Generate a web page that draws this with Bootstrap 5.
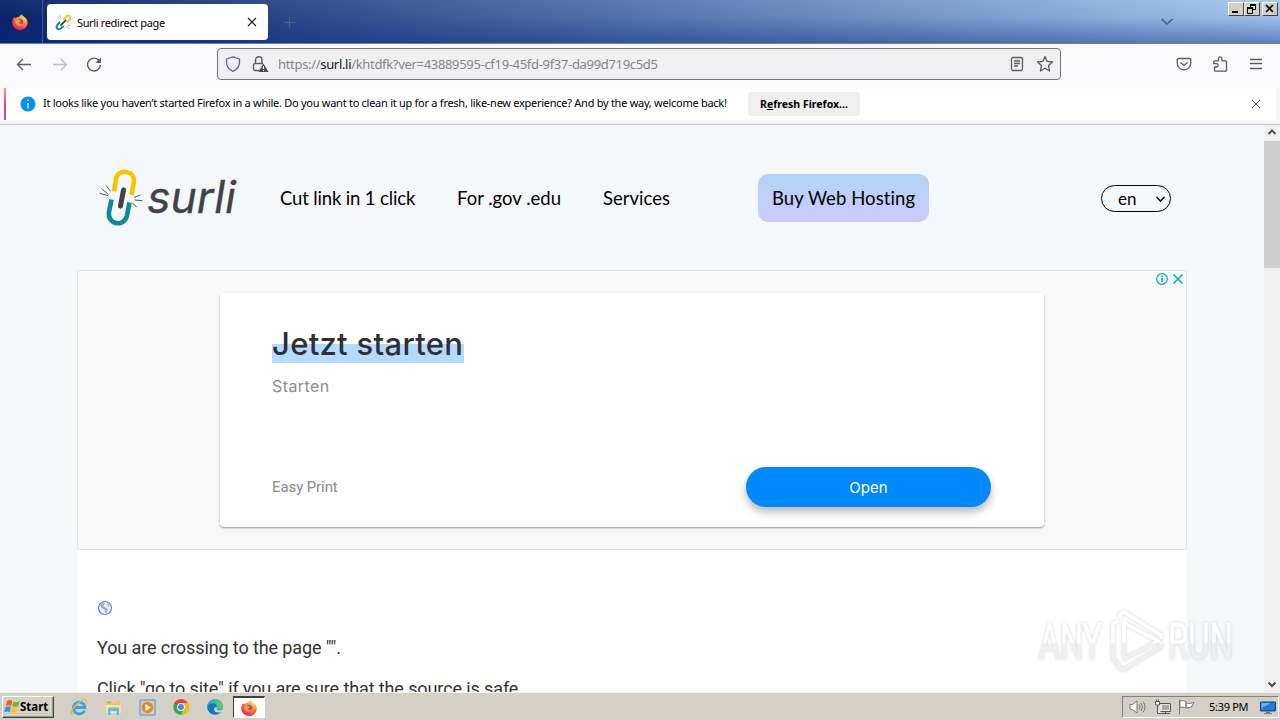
<!doctype html>
<html lang="en" data-bs-theme="light">

<head>
    <meta charset="utf-8">
    <meta name="viewport" content="width=device-width, initial-scale=1">
    <title>Surli redirect page</title>
    <link href="https://cdn.jsdelivr.net/npm/bootstrap@5.3.0/dist/css/bootstrap.min.css" rel="stylesheet">
    <style>
        body {
            width: 1280px;
            height: 720px;
            overflow: hidden;
            font-family: "Noto Sans", "Open Sans", sans-serif;
            font-size: 11px;
            line-height: 14px;
            color: #000;
            background: #f3f7fb;
        }

        svg {
            display: block;
            flex: none;
        }

        .tabbar {
            height: 44px;
            background: linear-gradient(90deg, #0a246a, #a6caf0);
            border-bottom: 1px solid #6c7fa8;
        }

        .tabbar-shade {
            height: 43px;
            background: linear-gradient(180deg, rgba(255, 255, 255, .04), rgba(10, 40, 130, .05) 40%, rgba(10, 40, 130, .45));
        }

        .home-tab {
            width: 43px;
            height: 43px;
            padding: 14px 0 0 12px;
            border-right: 1px solid #42578f;
        }

        .page-tab {
            width: 221px;
            height: 36px;
            margin: 4px 0 0 4px;
            padding: 0 11px 0 8px;
            border-radius: 4px;
            background: #fff;
        }

        .tab-title {
            width: 175px;
            padding: 2px 0 0 5px;
            letter-spacing: -.36px;
        }

        .tab-list {
            margin-right: 54px;
        }

        .win-buttons {
            margin: 2px 2px 0 0;
        }

        .win-btn {
            width: 16px;
            height: 14px;
            background: #d4d0c8;
            border: 1px solid;
            border-color: #fff #404040 #404040 #fff;
        }

        .win-btn svg {
            width: 13px;
            height: 12px;
        }

        .win-close {
            margin-left: 2px;
        }

        .toolbar {
            height: 44px;
            padding: 4px 16px 0 16px;
            background: #f9f9fb;
        }

        .tool-icon {
            width: 16px;
            height: 16px;
            margin-top: 8px;
        }

        .forward {
            margin: 8px 18px 0 20px;
        }

        .urlbar {
            width: 844px;
            height: 32px;
            margin-left: 114px;
            padding: 0 6px 0 7px;
            border: 1px solid #75747b;
            border-radius: 4px;
            background: #f0f0f4;
        }

        .lock {
            margin-left: 11px;
        }

        .url-text {
            padding-left: 9px;
            font-size: 13px;
            letter-spacing: -.32px;
            color: #84848b;
        }

        .url-text b {
            font-weight: 400;
            color: #15141a;
        }

        .star {
            margin-left: 12px;
        }

        .notice {
            height: 37px;
            padding: 0 0 4px 4px;
            background: #f6f6f7;
            border-bottom: 1px solid #c4c4c8;
        }

        .notice-body {
            width: 1272px;
            height: 32px;
            padding-left: 14px;
            background: #fff;
            border-radius: 0 4px 4px 0;
            border-left: 2px solid;
            border-image: linear-gradient(#ff9a66, #e7458d 50%, #9059d8) 1;
        }

        .notice-text {
            flex: none;
            width: 712px;
            padding: 0 0 2px 7px;
            white-space: nowrap;
            letter-spacing: -.27px;
        }

        .refresh-btn {
            flex: none;
            width: 112px;
            height: 24px;
            border-radius: 4px;
            background: #efefef;
            font-weight: 700;
            font-size: 10.5px;
        }

        .viewport {
            height: 567px;
            overflow: hidden;
            background: #f4f8fb;
        }

        .site {
            width: 1110px;
            margin-left: 77px;
        }

        .site-head {
            height: 145px;
            padding: 44px 16px 0 22px;
            font-family: Lato, sans-serif;
            font-size: 18.5px;
            line-height: 24px;
        }

        .site-head > * {
            flex: none;
        }

        .logo-word {
            width: 135px;
            height: 58px;
            padding-left: 2px;
            font: italic 400 44.5px/56px Inter, sans-serif;
            color: #434247;
            -webkit-text-stroke: .3px #434247;
        }

        .hosting {
            width: 171px;
            height: 48px;
            margin: 5px 0 0 63px;
            border-radius: 10px;
            background: linear-gradient(#b0d5f4, #cec9fd);
            letter-spacing: .08px;
        }

        .nav-text {
            padding-top: 17px;
            white-space: nowrap;
        }

        .nav-a {
            width: 177px;
            letter-spacing: -.15px;
        }

        .nav-b {
            width: 146px;
        }

        .nav-c {
            width: 92px;
        }

        .lang {
            width: 70px;
            height: 27px;
            margin: 16px 0 0 172px;
            padding: 0 4px 0 16px;
            border: 1px solid #000;
            border-radius: 14px;
            font-size: 17px;
        }

        .ad {
            height: 280px;
            padding: 22px 0 0 142px;
            background: #f8f8f8;
            border: 1px solid #dfe6eb;
        }

        .ad-choices {
            position: absolute;
            right: 2px;
            top: 2px;
        }

        .ad-box {
            width: 824px;
            height: 234px;
            padding: 34px 53px 20px 52px;
            border-radius: 4px;
            background: #fff;
            box-shadow: 0 1px 2px rgba(0, 0, 0, .4);
            font-family: Inter, sans-serif;
            color: #8b8b8b;
        }

        .ad-title {
            width: 192px;
            height: 36px;
            font-size: 31px;
            font-weight: 500;
            line-height: 33px;
            letter-spacing: .3px;
            white-space: nowrap;
            color: #2c2f33;
            background: linear-gradient(transparent 17px, #b3dbff 17px);
        }

        .ad-sub {
            padding-top: 11px;
            font-size: 16px;
            line-height: 24px;
            letter-spacing: .4px;
        }

        .ad-brand {
            font: 15px/20px Roboto, sans-serif;
            letter-spacing: -.1px;
        }

        .open-btn {
            width: 245px;
            height: 40px;
            padding-top: 2px;
            border-radius: 20px;
            background: #08f;
            color: #fff;
            font-size: 15px;
            box-shadow: 0 5px 9px rgba(0, 0, 0, .28);
        }

        .site-body {
            height: 400px;
            padding: 50px 20px;
            background: #fff;
            font: 18px/20px Roboto, sans-serif;
            letter-spacing: -.11px;
            color: #333;
        }

        .site-body p {
            margin: 0 0 21px;
        }

        .globe {
            margin-bottom: 22px;
        }

        .scroll {
            width: 16px;
            background: #f0f0f0;
        }

        .thumb {
            height: 127px;
            background: #cdcdcd;
        }

        .taskbar {
            height: 28px;
            padding: 3px 1px 2px 2px;
            background: #d4d0c8;
            border-top: 1px solid #f4f2ee;
        }

        .start-btn {
            width: 52px;
            height: 22px;
            padding-left: 1px;
            border: 1px solid;
            border-color: #fff #404040 #404040 #fff;
            box-shadow: inset -1px -1px #9a968e;
            font-weight: 700;
            font-size: 11.5px;
        }

        .task-icon {
            width: 34px;
            height: 22px;
        }

        .task-active {
            width: 32px;
            height: 22px;
            margin-left: 1px;
            background: #fff;
            border: 1px solid;
            border-top-width: 2px;
            border-color: #404040 #fff #fff #404040;
        }

        .tray {
            width: 157px;
            height: 22px;
            padding: 0 2px 0 6px;
            border: 1px solid;
            border-color: #808080 #fff #fff #808080;
        }

        .clock {
            width: 61px;
            padding-left: 14px;
            white-space: nowrap;
            letter-spacing: -.3px;
        }

        .watermark {
            position: absolute;
            left: 1028px;
            top: 604px;
        }
    </style>
</head>

<body class="d-flex flex-column">

    <svg width="0" height="0" class="position-absolute">
        <defs>
            <radialGradient id="fxFlame" cx=".75" cy=".15" r="1">
                <stop offset="0" stop-color="#ffe14d" />
                <stop offset=".4" stop-color="#ff9427" />
                <stop offset=".75" stop-color="#ff3b4b" />
                <stop offset="1" stop-color="#d91a80" />
            </radialGradient>
            <linearGradient id="edgeWave" x1="0" y1="0" x2="1" y2="0">
                <stop offset="0" stop-color="#1ba2df" />
                <stop offset="1" stop-color="#5bd45b" />
            </linearGradient>
            <symbol id="firefox" viewBox="0 0 16 16">
                <path fill="url(#fxFlame)" d="M1 5.2 2 3l1.2 1.3C4 3.6 5 3 6 3c.8-.2 1.7-.8 2-1.2C8.600 1 9.300.4 10 .2c-.1 1.300.7 2 2 2.800C15 4.600 16 7 15.600 9.600 15 13.400 12 16 8 16S.6 13 .3 9C.2 7.500.5 6.200 1 5.200z" />
                <circle cx="7.800" cy="8.200" r="3.400" fill="#8045d5" />
                <path fill="#ff9b24" d="M2.800 5.500C4.500 4.500 6.500 5 7.500 6.300l2 .2c-.3 1.200-2 1.400-2.200 1.800-.3 1.700 2 2.400 4.200.9-1.200 3.200-6.500 3.400-7.800.3-.7-1.500-.7-2.700-.9-4z" />
                <path fill="#ffd63f" d="M10 .2c-.2 1.600.8 2.500 1.900 3.600 1.300 1.400 1.500 3.100 1 5.200 2-2.500.8-5-.9-6.200C10.700 2 10 1.300 10 .2z" />
            </symbol>
        </defs>
    </svg>

    <div class="tabbar">
        <div class="tabbar-shade d-flex">
            <div class="home-tab"><svg width="16" height="16"><use href="#firefox" /></svg></div>
            <div class="page-tab d-flex align-items-center">
                <svg width="17" height="17" viewBox="0 0 17 17" fill="none" stroke-linecap="round">
                    <path stroke="#f3c63e" stroke-width="2" d="m9 5 2.200-2.600c2.600-2.200 5.600.8 3.500 3.400L12.500 8" />
                    <path stroke="#238696" stroke-width="2" d="M4.500 8.500 2.400 11c-2.200 2.500.8 5.600 3.400 3.500L8 12.500" />
                    <path stroke="#444" stroke-width="1.800" d="m6 11 4.700-4.700" />
                    <path stroke="#777" stroke-width=".6" d="M4 4.500 2.500 3M5.500 3.500 5 1.500M12 12.500l2 2M13 11l2 .5" />
                </svg>
                <span class="tab-title">Surli redirect page</span>
                <svg width="10" height="10" viewBox="0 0 10 10" stroke="#222" stroke-width="1.200">
                    <path d="m1 1 8 8M9 1 1 9" />
                </svg>
            </div>
            <svg class="ms-3 mt-3" width="13" height="13" viewBox="0 0 13 13" stroke="#4e6182">
                <path d="M5.500 1v11M0 6.500h11" />
            </svg>
            <svg class="tab-list ms-auto" width="14" height="43" viewBox="0 0 14 43" fill="none" stroke="#3f5f8f" stroke-width="1.500">
                <path d="m1.500 19 5.500 5 5.500-5" />
            </svg>
            <div class="win-buttons d-flex">
                <div class="win-btn"><svg viewBox="0 0 13 12"><path d="M3 8h6v2H3z" /></svg></div>
                <div class="win-btn"><svg viewBox="0 0 13 12" fill="none" stroke="#000">
                        <path d="M5 1.500h6M5.500 1v3M10.500 1v5.500H8M5 2.500h6M2.500 5v5.500h5V5M2 5h6" />
                        <path stroke-width="2" d="M2 5h6" />
                    </svg></div>
                <div class="win-btn win-close"><svg viewBox="0 0 13 12" stroke="#000" stroke-width="1.700"><path d="m3 2 7 7M10 2 3 9" /></svg></div>
            </div>
        </div>
    </div>

    <div class="toolbar d-flex">
        <svg class="tool-icon" viewBox="0 0 16 16" fill="none" stroke="#5b5b66" stroke-width="1.300">
            <path d="M1.500 8.500H15M7 3 1.500 8.500 7 14" />
        </svg>
        <svg class="tool-icon forward" viewBox="0 0 16 16" fill="none" stroke="#bdbdc4" stroke-width="1.300">
            <path d="M1 8.500h13.500M9 3l5.500 5.500L9 14" />
        </svg>
        <svg class="tool-icon ms-0" viewBox="0 0 16 16" fill="none" stroke="#5b5b66" stroke-width="1.400">
            <path d="M13 4.500A6.400 6.400 0 1 0 14.400 9" />
            <path fill="#5b5b66" stroke="none" d="M15 1.500V7H9.500z" />
        </svg>
        <div class="urlbar d-flex align-items-center ms-auto">
            <svg width="16" height="16" viewBox="0 0 16 16" fill="none" stroke="#6753c4" stroke-width="1.300">
                <path d="M8 .8 14.500 3v3.500c0 4-2.500 7-6.500 8.900-4-1.900-6.500-4.900-6.500-8.900V3z" stroke-linejoin="round" />
            </svg>
            <svg class="lock" width="17" height="16" viewBox="0 0 17 16" fill="none" stroke="#5b5b66" stroke-width="1.400">
                <path d="M7.500 14.500H3A1.500 1.500 0 0 1 1.500 13V9A1.500 1.500 0 0 1 3 7.500h8M3.500 7.500V4a3 3 0 0 1 6.500 0v3.500" />
                <path fill="#4b4b55" stroke="none" d="M11.500 7.500 16.500 16h-10z" />
                <path stroke="#fff" stroke-width="1.100" d="M11.500 10v3m0 1v1" />
            </svg>
            <span class="url-text">https://<b>surl.li</b>/khtdfk?ver=43889595-cf19-45fd-9f37-da99d719c5d5</span>
            <svg class="ms-auto" width="14" height="16" viewBox="0 0 14 16" fill="none" stroke="#5b5b66" stroke-width="1.300">
                <rect x="1.500" y="1.500" width="11" height="13" rx="1.500" />
                <path d="M4 5h6M4 7.500h6M4 10h4" />
            </svg>
            <svg class="star" width="18" height="18" viewBox="0 0 18 18" fill="none" stroke="#5b5b66" stroke-width="1.300" stroke-linejoin="round">
                <path d="m9 1.500 2.200 4.900 5.300.6-4 3.600 1.100 5.400L9 13.300 4.400 16l1.100-5.400-4-3.600 5.300-.6z" />
            </svg>
        </div>
        <div class="d-flex ms-auto gap-3">
            <svg class="tool-icon me-1" viewBox="0 0 16 16" fill="none" stroke="#5b5b66" stroke-width="1.300">
                <path d="M2.500 2.500h11c.8 0 1.300.5 1.300 1.300V7c0 4-3 6.800-6.800 6.800S1.200 11 1.200 7V3.800c0-.8.5-1.300 1.300-1.300z" />
                <path d="M4.500 6.500 8 9.500l3.500-3" />
            </svg>
            <svg class="tool-icon me-1" viewBox="0 0 16 16" fill="none" stroke="#5b5b66" stroke-width="1.300" stroke-linejoin="round">
                <path d="M6.500 4.800V2.500a1.700 1.700 0 0 1 3.400 0v2.300h3.600a1 1 0 0 1 1 1v8.400a1 1 0 0 1-1 1H3.500a1 1 0 0 1-1-1V11h2a1.700 1.700 0 0 0 0-3.400H1.800V5.800a1 1 0 0 1 1-1z" />
            </svg>
            <svg class="tool-icon" viewBox="0 0 16 16" stroke="#5b5b66" stroke-width="1.300">
                <path d="M2 3.500h12M2 7.500h12M2 12.500h12" />
            </svg>
        </div>
    </div>

    <div class="notice">
        <div class="notice-body d-flex align-items-center">
            <svg width="16" height="16" viewBox="0 0 16 16">
                <circle cx="8" cy="8" r="7.500" fill="#0090ed" />
                <path stroke="#fff" stroke-width="1.200" d="M8 7v5.500M8 3.500V5" />
            </svg>
            <span class="notice-text">It looks like you haven’t started Firefox in a while. Do you want to clean it up for a fresh, like-new experience? And by the way, welcome back!</span>
            <span class="refresh-btn d-flex align-items-center justify-content-center">R<u>e</u>fresh Firefox...</span>
            <svg class="ms-auto me-3" width="8" height="8" viewBox="0 0 8 8" stroke="#4c4c55"><path d="m0 0 8 8M8 0 0 8" /></svg>
        </div>
    </div>

    <div class="viewport d-flex">
        <div class="site">
            <div class="site-head d-flex">
                <svg width="46" height="58" viewBox="0 0 46 58" fill="none" stroke-linecap="round">
                    <path stroke="#f8c400" stroke-width="4.600" stroke-linecap="butt" d="m15 22.500 2.200-13.500c2.600-10.200 19.600-7.500 17.600 4.500L32.500 26" />
                    <path stroke="#10889a" stroke-width="4.600" stroke-linecap="butt" d="M12.500 30.500 10 43c-2 12.500 15 16 18 3.500l2.500-13" />
                    <path stroke="#434247" stroke-width="5" d="M24.500 21 21.500 37" />
                    <path stroke="#555" stroke-width="1" d="m7.500 17 4 5M3 20l6 5M1 24.500l8 2M36 31l7 .7M35.500 28.500l5.500-2.500M33.500 34l4 4" />
                </svg>
                <span class="logo-word">surli</span>
                <span class="nav-text nav-a">Cut link in 1 click</span>
                <span class="nav-text nav-b">For .gov .edu</span>
                <span class="nav-text nav-c">Services</span>
                <span class="hosting d-flex align-items-center justify-content-center">Buy Web Hosting</span>
                <span class="lang d-flex align-items-center justify-content-between">en
                    <svg width="11" height="8" viewBox="0 0 11 8" fill="none" stroke="#111" stroke-width="1.600"><path d="m1.500 2 4 4 4-4" /></svg>
                </span>
            </div>
            <div class="ad position-relative">
                <div class="ad-choices d-flex gap-1">
                    <svg width="12" height="12" viewBox="0 0 12 12" fill="none" stroke="#00aebd" stroke-width="1.200"><circle cx="6" cy="6" r="5.300" /><path stroke-width="1.600" d="M6 5v4M6 2.500V4" /></svg>
                    <svg width="12" height="12" viewBox="0 0 12 12" stroke="#00aebd" stroke-width="1.500"><path d="m1.500 1.500 9 9M10.500 1.500l-9 9" /></svg>
                </div>
                <div class="ad-box d-flex flex-column">
                    <div class="ad-title">Jetzt starten</div>
                    <div class="ad-sub">Starten</div>
                    <div class="d-flex mt-auto justify-content-between align-items-center">
                        <span class="ad-brand">Easy Print</span>
                        <span class="open-btn d-flex align-items-center justify-content-center">Open</span>
                    </div>
                </div>
            </div>
            <div class="site-body">
                <svg class="globe" width="16" height="16" viewBox="0 0 16 16">
                    <circle cx="8" cy="8" r="6.500" fill="#f1f3fb" stroke="#7079a6" stroke-width="1.200" />
                    <path fill="#a3addb" d="M3 5.500C4 3.500 5.500 2.500 7.500 2.500L8 4 6.500 5.500 7 7l2.500.5L11 9.500l-1.500 4L8 12.500 7.500 9.500 4.500 8zM10.500 3l2 2-.5 2-1.500-1.500z" />
                </svg>
                <p>You are crossing to the page "".</p>
                <p>Click "go to site" if you are sure that the source is safe.</p>
            </div>
        </div>
        <div class="scroll ms-auto d-flex flex-column">
            <svg width="16" height="16" viewBox="0 0 16 16" fill="none" stroke="#505050" stroke-width="2"><path d="m4.500 9 3.500-3.500L11.500 9" /></svg>
            <div class="thumb"></div>
            <svg class="mt-auto" width="16" height="16" viewBox="0 0 16 16" fill="none" stroke="#505050" stroke-width="2"><path d="m4.500 6.500 3.500 3.500 3.500-3.500" /></svg>
        </div>
    </div>

    <div class="taskbar d-flex">
        <div class="start-btn d-flex align-items-center">
            <svg width="16" height="16" viewBox="0 0 16 16">
                <path fill="#ee5b28" d="M3 2c2-1.500 3.500-1 5.300 0L7.200 7c-1.700-1-3.200-1-5.400 0z" />
                <path fill="#77b82a" d="M9.300 2.500c2 1 3.700 1 6.500-.5L14.300 7c-2.300 1.500-4 1-6.100.3z" />
                <path fill="#3a8ee0" d="M1.500 8.300c2-1.300 3.700-1 5.400 0l-1.300 5c-1.600-1-3.200-1-5.400 0z" />
                <path fill="#ffc917" d="M7.800 8.500c2 1 4 1 6.200-.3l-1.500 5c-2.200 1.500-4 1-6 .3z" />
            </svg>
            Start
        </div>
        <div class="d-flex ms-2">
            <div class="task-icon d-flex align-items-center justify-content-center">
                <svg width="18" height="18" viewBox="0 0 18 18" fill="none">
                    <path stroke="#39a4df" stroke-width="2.800" d="M14.500 12.500A5.800 5.800 0 1 1 15 9.500H5" />
                    <path stroke="#e9b932" stroke-width="1.300" d="M3.500 15.500C-.5 18 1 12 6.500 6.500S18.500-.5 16 4.500" />
                </svg>
            </div>
            <div class="task-icon d-flex align-items-center justify-content-center">
                <svg width="17" height="17" viewBox="0 0 17 17">
                    <path fill="#e9c767" d="M1 4V2h5l1 1.500h3V2h5v12H1z" />
                    <path fill="#f8e6a0" d="M1 6h15v8H1z" />
                    <path fill="#67b8dd" d="M3 16v-5.500C3 9 4 8.500 5 8.500h7c1.200 0 2 .5 2 2V16h-2.500v-4h-6v4z" />
                    <path fill="#5cab62" d="M3 3h2v1H3z" />
                </svg>
            </div>
            <div class="task-icon d-flex align-items-center justify-content-center">
                <svg width="17" height="17" viewBox="0 0 17 17">
                    <path fill="#b6d2e9" stroke="#5c93bd" d="M1 1h15v15H1z" />
                    <circle cx="8.500" cy="8.500" r="5.800" fill="#f28314" />
                    <path fill="#fff" d="M6.500 5v7l5.500-3.500z" />
                </svg>
            </div>
            <div class="task-icon d-flex align-items-center justify-content-center">
                <svg width="16" height="16" viewBox="0 0 16 16">
                    <circle cx="8" cy="8" r="7.800" fill="#34a853" />
                    <path fill="#ea4335" d="M8 8 1.300 4A7.800 7.800 0 0 1 14.700 4z" />
                    <path fill="#fbbc04" d="M8 4h6.700A7.800 7.800 0 0 1 8 15.800L11.500 9z" />
                    <circle cx="8" cy="8" r="3.900" fill="#fff" />
                    <circle cx="8" cy="8" r="3" fill="#4285f4" />
                </svg>
            </div>
            <div class="task-icon d-flex align-items-center justify-content-center">
                <svg width="16" height="16" viewBox="0 0 16 16">
                    <circle cx="8" cy="8" r="7.800" fill="#1574c4" />
                    <path fill="url(#edgeWave)" d="M.3 7C1.500-1.800 14.800-2 15.800 6.500c.3 2.700-1.300 4.200-3.500 4.200-2.500 0-3.300-1-2.300-2.200C10.500 3.500 3.500 3 .3 7z" />
                    <path fill="#d4d0c8" d="M10 8.500c-1.300 1.300.4 2.700 2.500 2.700 1 0 2.500-.7 3-1l.5 1-2 2c-4 1-7-.5-7-3 0-1.200 1-2.200 2.500-2.200z" />
                </svg>
            </div>
            <div class="task-active d-flex align-items-center justify-content-center">
                <svg width="16" height="16"><use href="#firefox" /></svg>
            </div>
        </div>
        <div class="tray d-flex align-items-center ms-auto">
            <svg width="18" height="16" viewBox="0 0 18 16" fill="#fff" stroke="#777">
                <path d="M1 5.500h2.500L8 2v12l-4.500-3.500H1z" />
                <path fill="none" d="M10 5.500q2 2.500 0 5M12 4q3 4 0 8M14 2.500q4 5.500 0 11" />
            </svg>
            <svg class="ms-2" width="16" height="16" viewBox="0 0 16 16" fill="#e5e5e0" stroke="#555">
                <path d="M3.500 4.500h12v8h-10M6 14.500h9M10.500 12.500v2M2.500 6v8.500h4" />
                <path fill="#fff" d="M.5 2.500h4V6h-4zM1.500.5v2M3.500.5v2" />
                <path fill="#aaa" stroke="none" d="M7 6h7v5H7z" />
            </svg>
            <svg class="ms-2" width="16" height="16" viewBox="0 0 16 16" fill="#fff" stroke="#777">
                <path d="M.5.5v15" />
                <path d="M1 2c3-1 4 0 6 .5V9C5 8 3 8 1 8.500zM7 4c2 1 4 .5 8-.5L12.500 8 7 9z" />
            </svg>
            <span class="clock">5:39 PM</span>
            <svg class="ms-auto" width="16" height="15" viewBox="0 0 16 15">
                <path fill="#2878cf" stroke="#164579" d="M.5 2h15v9H.5z" />
                <path fill="#69b2ef" d="M1.500 3H11l-9.500 5z" />
                <path fill="#777" d="M6 12h4v1h2v1H4v-1h2z" />
            </svg>
        </div>
    </div>

    <svg class="watermark" width="226" height="76" viewBox="-10 -2 226 76" fill="none">
        <defs>
            <filter id="wmShadow" x="-20%" y="-20%" width="140%" height="140%">
                <feDropShadow dx="0" dy="0" stdDeviation="1.500" flood-color="#777" flood-opacity=".42" />
            </filter>
            <linearGradient id="wmFill" x1="0" y1="14" x2="0" y2="58" gradientUnits="userSpaceOnUse">
                <stop offset=".5" stop-color="#fff" />
                <stop offset=".55" stop-color="#eeeff0" />
            </linearGradient>
        </defs>
        <g filter="url(#wmShadow)" opacity=".9">
            <text x="1" y="53" textLength="63" lengthAdjust="spacingAndGlyphs" font-family="Roboto, sans-serif" font-size="50" fill="url(#wmFill)" stroke="url(#wmFill)" stroke-width=".5">ANY</text>
            <text x="130" y="53" textLength="65" lengthAdjust="spacingAndGlyphs" font-family="Roboto, sans-serif" font-size="50" fill="url(#wmFill)" stroke="url(#wmFill)" stroke-width=".5">RUN</text>
            <g stroke="url(#wmFill)" stroke-width="3.400" stroke-linejoin="round">
                <path d="M86 17v36l34-18zM80 15l-5 3v36l5 3v4l5 3 38-23v-5M82 12V8l4-2 37 23v4" />
            </g>
        </g>
    </svg>

    <script src="https://cdn.jsdelivr.net/npm/bootstrap@5.3.0/dist/js/bootstrap.bundle.min.js"></script>
</body>

</html>
